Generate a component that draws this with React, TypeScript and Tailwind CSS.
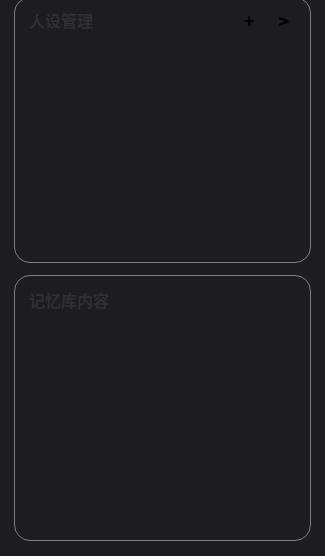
export default function App() {
  return (
    <div
      className="h-[556px] overflow-hidden bg-[#1c1c21] px-[14px]"
      style={{ fontFamily: '"Noto Sans CJK SC", "Noto Sans", sans-serif' }}
    >
      <div className="-mt-[3px] flex flex-col gap-3">
        <section className="h-[266px] rounded-[16px] border border-[#7d7d82] px-[14px] pt-[10px]">
          <div className="flex items-center justify-between">
            <h2 className="text-base font-bold leading-6 text-[#2f2f33]">人设管理</h2>
            <div className="flex items-center gap-[24px] pr-[7px] text-lg font-bold text-black">
              <button className="leading-6">+</button>
              <button className="leading-6">&gt;</button>
            </div>
          </div>
        </section>
        <section className="h-[266px] rounded-[16px] border border-[#7d7d82] px-[14px] pt-[12px]">
          <h2 className="text-base font-bold leading-6 text-[#2f2f33]">记忆库内容</h2>
        </section>
      </div>
    </div>
  );
}
